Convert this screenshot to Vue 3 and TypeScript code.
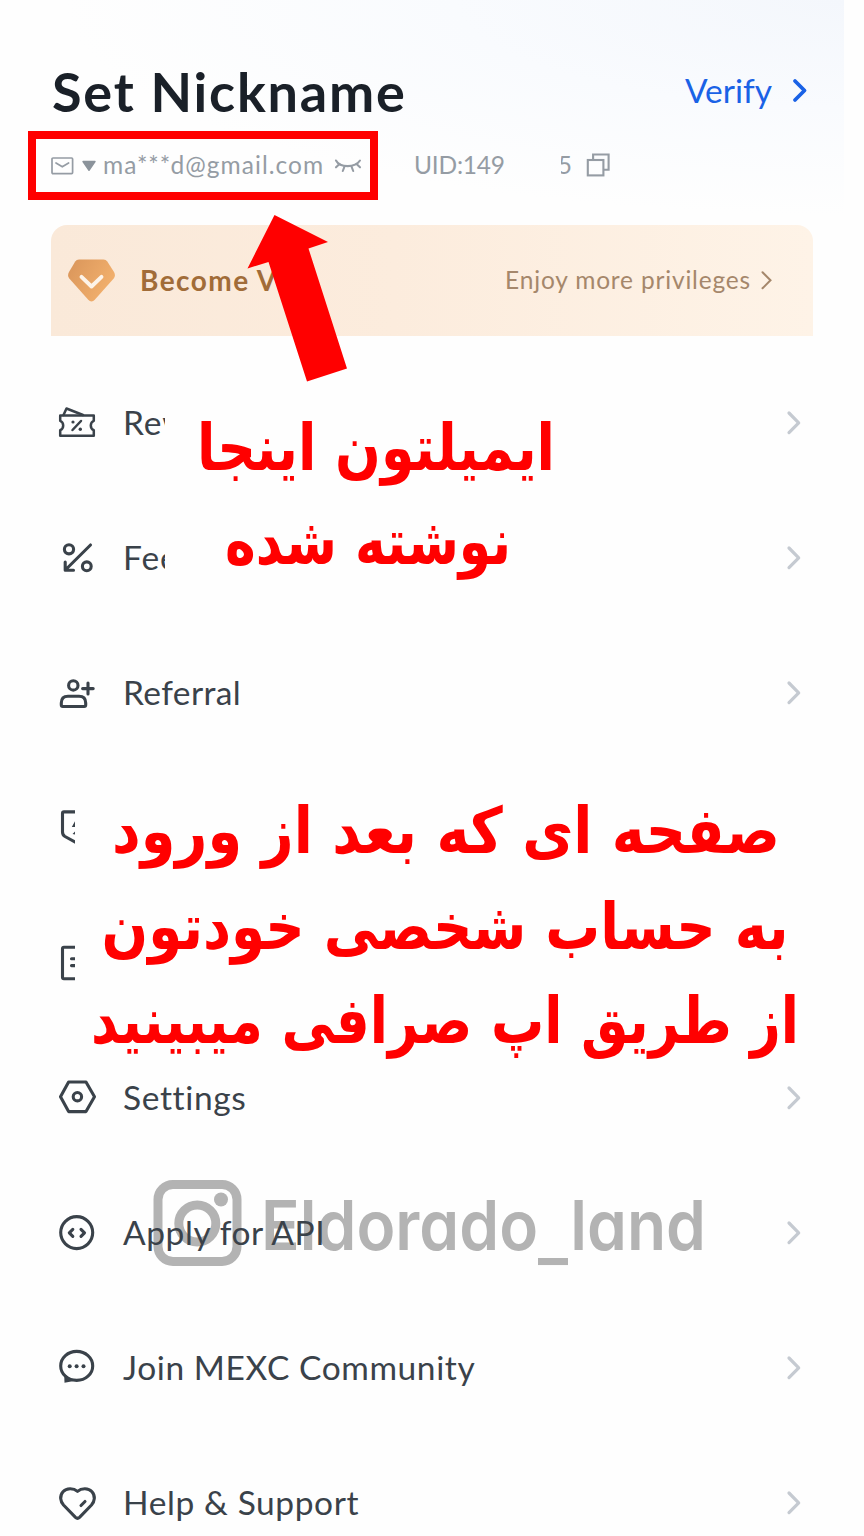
<script setup lang="ts">
interface MenuItem {
  id: string
  label: string
  cut?: boolean
  iconCut?: boolean
  arrow: boolean
}

const items: MenuItem[] = [
  { id: 'rewards', label: 'Rew', cut: true, arrow: true },
  { id: 'fees', label: 'Fee', cut: true, arrow: true },
  { id: 'referral', label: 'Referral', arrow: true },
  { id: 'security', label: '', iconCut: true, arrow: false },
  { id: 'orders', label: '', iconCut: true, arrow: false },
  { id: 'settings', label: 'Settings', arrow: true },
  { id: 'api', label: 'Apply for API', arrow: true },
  { id: 'community', label: 'Join MEXC Community', arrow: true },
  { id: 'help', label: 'Help & Support', arrow: true },
]
</script>

<template>
  <main class="page">
    <div class="glow"></div>

    <div class="watermark">
      <svg width="560" height="100" viewBox="150 1175 560 100">
        <rect x="158" y="1184.5" width="79" height="77" rx="15" fill="none" stroke="#b3b3b3" stroke-width="9" />
        <circle cx="197.3" cy="1223.5" r="18.5" fill="none" stroke="#b3b3b3" stroke-width="9" />
        <circle cx="221" cy="1199.5" r="7" fill="#b3b3b3" />
        <text class="wm-text" x="261" y="1250" textLength="445" lengthAdjust="spacingAndGlyphs">Eldorado<tspan dy="8">_</tspan><tspan dy="-8">land</tspan></text>
      </svg>
    </div>

    <header class="head">
      <div class="title-row">
        <h1>Set Nickname</h1>
        <div class="verify">
          <span>Verify</span>
          <svg width="18" height="28" viewBox="0 0 18 28"><path d="M4 4 L13.500 13.500 L4 23" fill="none" stroke="#1a62e6" stroke-width="3.8" stroke-linecap="round" stroke-linejoin="round" /></svg>
        </div>
      </div>
      <div class="meta">
        <div class="mail">
          <svg width="23" height="18" viewBox="0 0 23 18"><g fill="none" stroke="#959ca4" stroke-width="1.7" stroke-linejoin="round" stroke-linecap="round"><rect x="1" y="1" width="20.6" height="15.6" rx="1" /><path d="M5 6 L11.3 9.8 L17.6 6" /></g></svg>
          <svg class="tri" width="16" height="12" viewBox="0 0 16 12"><path d="M2 1.5 H14 L8 10.3Z" fill="#8b939b" stroke="#8b939b" stroke-width="1.4" stroke-linejoin="round" /></svg>
          <span class="addr">ma***d@gmail.com</span>
          <svg class="eye" width="28" height="16" viewBox="0 0 28 16"><g fill="none" stroke="#959ca4" stroke-width="2.1" stroke-linecap="round"><path d="M2 2.500 C6 10 21 10 26 2.500" /><path d="M5.500 6 L2 9.300 M10.500 8.500 L8.800 13 M17.500 8.500 L19.200 13 M22.500 6 L26 9.300" /></g></svg>
        </div>
        <div class="uid">
          <span class="u1">UID:149</span>
          <span class="u2"><b>5</b></span>
          <svg width="24" height="24" viewBox="0 0 24 24"><g fill="none" stroke="#959ca4" stroke-width="2.1"><rect x="1.800" y="7" width="15.6" height="15.4" /><path d="M7.100 7 V1.500 H22.600 V16.700 H17.400" /></g></svg>
        </div>
      </div>
    </header>

    <section class="vip">
      <svg width="50" height="46" viewBox="66 257 50 46">
        <defs><linearGradient id="gem" x1="0" y1="0" x2="1" y2="0.5"><stop offset="0" stop-color="#d9955a" /><stop offset="1" stop-color="#f2b06d" /></linearGradient></defs>
        <path d="M79 258.500 H103.500 Q106 258.500 107.300 260.500 L114 271 Q116 274.500 113.700 277.500 L95 298.500 Q91.500 302.300 88 298.500 L69.300 277.500 Q67 274.500 69 271 L75.200 260.500 Q76.500 258.500 79 258.500Z" fill="url(#gem)" />
        <path d="M81.500 275.800 L91.500 285.500 L101.500 275.800" fill="none" stroke="#fdf3e8" stroke-width="3.900" stroke-linecap="round" stroke-linejoin="round" />
      </svg>
      <strong>Become V</strong>
      <span class="enjoy">Enjoy more privileges</span>
      <svg class="vip-arrow" width="14" height="20" viewBox="0 0 14 20"><path d="M2.500 1.300 L10.500 9.300 L2.500 17.300" fill="none" stroke="#a5876b" stroke-width="2" stroke-linecap="round" /></svg>
    </section>

    <ul class="menu">
      <li v-for="item in items" :key="item.id">
        <span class="icon" :class="{ 'icon-cut': item.iconCut }">
          <svg width="40" height="40" viewBox="0 0 40 40" fill="none" stroke="#3a424a" stroke-width="3.1" stroke-linejoin="round" stroke-linecap="round">
            <g v-if="item.id === 'rewards'" stroke-width="2.500">
              <path d="M3.200 13.500 H36.800 V18.800 C32.800 20.500 32.800 26.500 36.800 28.200 V33.700 H3.200 V28.200 C7.200 26.500 7.200 20.500 3.200 18.800Z" />
              <path d="M6.500 13 L9.500 6.500 L26 13 M24 19 L15.500 28" />
              <circle cx="16" cy="20" r="1.600" fill="#3a424a" stroke="none" /><circle cx="23.300" cy="27.300" r="1.700" fill="#3a424a" stroke="none" />
            </g>
            <g v-else-if="item.id === 'fees'">
              <circle cx="12" cy="12.300" r="4.600" /><circle cx="29.800" cy="29.300" r="4.400" />
              <path d="M33.500 8 L8.800 32.500 M8.200 25 V33.300 H16.500" />
            </g>
            <g v-else-if="item.id === 'referral'">
              <circle cx="16.300" cy="13.400" r="4.700" /><path d="M31 11 V22 M25.600 16.600 H36.200" />
              <path d="M11 24.200 H22 Q28.700 24.200 28.700 31 V33 Q28.700 34.500 27.200 34.500 H5.800 Q4.300 34.500 4.300 33 V31 Q4.300 24.200 11 24.200Z" />
            </g>
            <g v-else-if="item.id === 'security'">
              <path d="M20 4.900 H7 Q5.500 4.900 5.500 6.400 V25 Q5.500 28 8 29.500 L20 36" />
              <path d="M19.500 11.500 L14.800 20 H20Z M15.500 27 L20 22.500 V28Z" fill="#3a424a" stroke="none" />
            </g>
            <g v-else-if="item.id === 'orders'"><path d="M22 5.200 H7 Q5.500 5.200 5.500 6.700 V35.300 Q5.500 36.800 7 36.800 H22 M14.500 16.700 H22 M14.500 23.600 H22" /></g>
            <g v-else-if="item.id === 'settings'"><path d="M11.600 5 H29 L37.500 19.700 L29 34.600 H11.600 L3.500 19.700Z" /><circle cx="20.400" cy="19.700" r="4.200" /></g>
            <g v-else-if="item.id === 'api'"><circle cx="19.700" cy="20.600" r="16" /><path d="M15.800 17.300 L12.300 20.800 L15.800 24.300 M24 17.300 L27.500 20.800 L24 24.300" /></g>
            <g v-else-if="item.id === 'community'">
              <ellipse cx="19.700" cy="18.900" rx="16" ry="14.500" />
              <path d="M7.200 27 L7.500 35.700 L17 34Z" fill="#3a424a" stroke="none" />
              <g fill="#3a424a" stroke="none"><circle cx="12.700" cy="19.200" r="2" /><circle cx="19.600" cy="19.200" r="2" /><circle cx="26.500" cy="19.200" r="2" /></g>
            </g>
            <g v-else><path d="M20.500 9.300 C16.500 5.800 9.500 5.700 6 9.700 C2.300 14 3.400 19.500 6.500 23 L18.500 35.300 Q20.500 37.200 22.500 35.300 L34.500 23 C37.600 19.500 38.700 14 35 9.700 C31.500 5.700 24.500 5.800 20.500 9.300Z" /><path d="M24 23.500 L28 19.500" /></g>
          </svg>
        </span>
        <span class="label" :class="[item.id, { cut: item.cut }]">{{ item.label }}</span>
        <svg v-if="item.arrow" class="chev" width="18" height="28" viewBox="0 0 18 28"><path d="M3 5 L12.700 14.800 L3 24.600" fill="none" stroke="#c5cad1" stroke-width="3.2" stroke-linecap="round" stroke-linejoin="round" /></svg>
      </li>
    </ul>

    <div class="highlight"></div>
    <svg class="notes" width="864" height="1536" viewBox="0 0 864 1536" fill="#ff0000">
      <path d="M274.500 215 L328 242 L308.500 248.500 L347 368.500 L307 381.500 L268.500 262 L247.500 268.500Z" />
      <g class="fa" direction="rtl" text-anchor="middle">
        <text x="376" y="470" textLength="358" lengthAdjust="spacingAndGlyphs">ایمیلتون اینجا</text>
        <text x="368" y="564" textLength="286" lengthAdjust="spacingAndGlyphs">نوشته شده</text>
        <text x="446" y="853" textLength="668" lengthAdjust="spacingAndGlyphs">صفحه ای که بعد از ورود</text>
        <text x="445" y="949" textLength="687" lengthAdjust="spacingAndGlyphs">به حساب شخصی خودتون</text>
        <text x="445" y="1043" textLength="708" lengthAdjust="spacingAndGlyphs">از طریق اپ صرافی میبینید</text>
      </g>
    </svg>
  </main>
</template>

<style>
body { margin: 0; background: #fefefe; overflow: hidden; }
</style>

<style scoped>
.page { position: relative; width: 864px; height: 1536px; overflow: hidden; background: #fefefe; font-family: Lato, "Noto Sans", sans-serif; font-variant-ligatures: none; color: #3a424a; }
.glow { position: absolute; left: 20px; top: 0; width: 824px; height: 220px; background: radial-gradient(ellipse 780px 215px at 100% 0, #f4f7fc 0, #f9fbfe 50%, #fefefe 100%); }
.watermark { position: absolute; left: 150px; top: 1175px; }
.watermark svg { display: block; }
.wm-text { font: 600 69px Inter, Lato, sans-serif; font-feature-settings: "cv11"; fill: #b3b3b3; }
.head { position: relative; box-sizing: border-box; height: 225px; padding: 56px 55px 0 51px; }
.title-row { display: flex; justify-content: space-between; align-items: center; height: 70px; }
h1 { margin: 1px 0 0 1px; font-size: 54px; line-height: 70px; font-weight: 700; letter-spacing: 1.8px; color: #1a2028; white-space: nowrap; }
.verify { display: flex; align-items: center; gap: 19px; font-size: 33.500px; letter-spacing: 0; color: #1a62e6; }
.verify span { margin-top: -2px; }
.meta { display: flex; align-items: center; height: 40px; margin-top: 20px; font-size: 24.500px; color: #959ca4; }
.mail { display: flex; align-items: center; width: 363px; flex: none; }
.tri { margin-left: 7px; }
.addr { margin: -3px 0 0 6px; width: 223px; letter-spacing: 1.040px; white-space: nowrap; }
.eye { margin-left: 8px; }
.uid { display: flex; align-items: center; }
.u1 { width: 91px; margin-top: -3px; letter-spacing: -.2px; white-space: nowrap; }
.u2 { display: flex; justify-content: flex-end; width: 11px; margin: -3px 0 0 56px; overflow: hidden; }
.u2 b { font-weight: 400; }
.uid svg { margin: -3px 0 0 14px; }
.vip { position: relative; display: flex; align-items: center; box-sizing: border-box; width: 762px; height: 111px; margin-left: 51px; padding: 0 39px 0 15px; border-radius: 16px 16px 0 0; background: linear-gradient(90deg, #fae9d9, #fcecdd 45%, #fef3e7); }
.vip strong { margin: -2px 0 0 24px; font-size: 28px; font-weight: 700; letter-spacing: 1.450px; color: #a16c38; }
.enjoy { margin: -2px 0 0 auto; font-size: 24.500px; letter-spacing: .82px; color: #a5876b; }
.vip-arrow { margin-left: 9px; }
.menu { position: relative; list-style: none; margin: 18.500px 0 0; padding: 0; }
.menu li { display: flex; align-items: center; height: 135px; padding: 0 60px 0 57px; }
.icon { flex: none; width: 40px; height: 40px; overflow: hidden; }
.icon-cut { width: 18px; }
.icon svg { display: block; }
.label { margin: -1px 0 0 26px; font-size: 33.500px; line-height: 44px; letter-spacing: .6px; white-space: nowrap; }
.referral { letter-spacing: .4px; }
.settings { letter-spacing: .65px; }
.cut { width: 42px; letter-spacing: .9px; overflow: hidden; }
.chev { margin-left: auto; }
.highlight { position: absolute; left: 28px; top: 131px; box-sizing: border-box; width: 350px; height: 69px; border: 8px solid #ff0000; }
.notes { position: absolute; left: 0; top: 0; }
.fa { font: 700 64px "DejaVu Sans", sans-serif; }
</style>
